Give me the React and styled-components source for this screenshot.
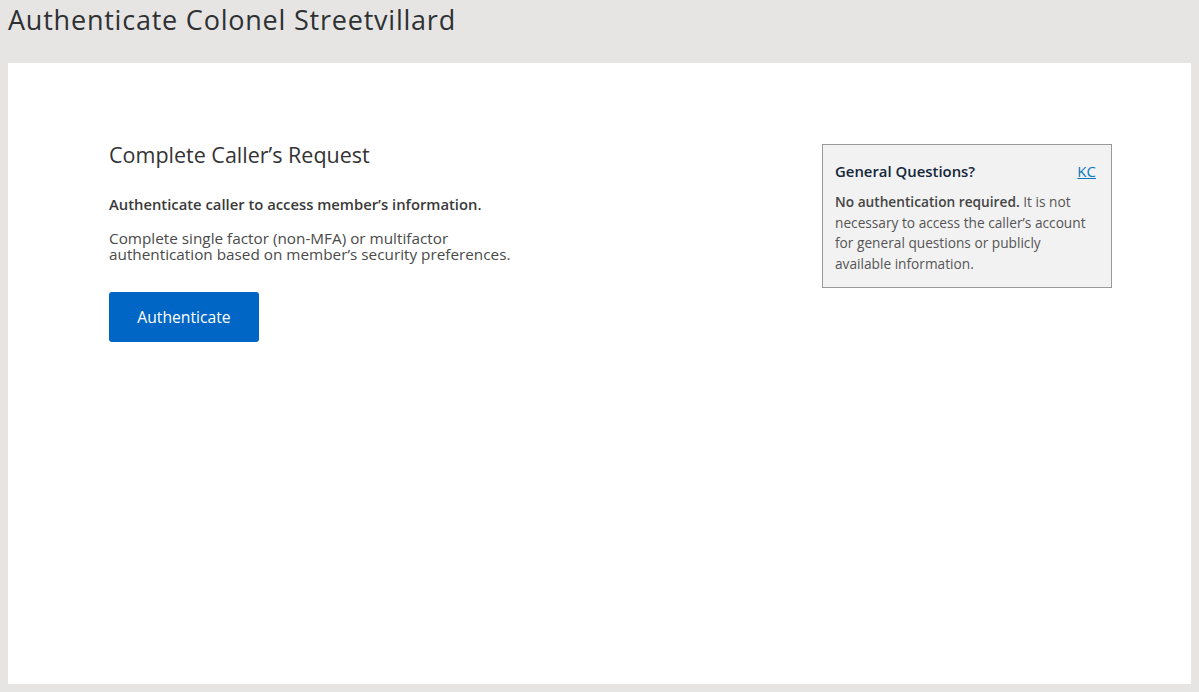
import React from 'react';
import styled, { createGlobalStyle } from 'styled-components';

const GlobalStyle = createGlobalStyle`
  html, body {
    margin: 0;
    padding: 0;
    background: #e6e5e3;
  }
  body {
    font-family: "Open Sans", Lato, sans-serif;
    color: #333;
  }
`;

const Page = styled.div`
  min-height: 692px;
  padding: 0 8px 8px;
  box-sizing: border-box;
  display: flex;
  flex-direction: column;
`;

const PageTitle = styled.h1`
  margin: 0;
  height: 63px;
  box-sizing: border-box;
  font-size: 27px;
  line-height: 40px;
  font-weight: 400;
  letter-spacing: 0.78px;
  color: #2e3133;
`;

const Panel = styled.main`
  flex: 1;
  background: #fff;
  padding: 81px 79px 40px 101px;
  display: flex;
  justify-content: space-between;
  align-items: flex-start;
`;

const Request = styled.section``;

const Heading = styled.h2`
  margin: -4px 0 25px;
  font-size: 21.5px;
  font-weight: 500;
  color: #333;
`;

const Lead = styled.p`
  margin: 0 0 16px;
  font-size: 14.8px;
  font-weight: 600;
  color: #3a3a3a;
`;

const Body = styled.p`
  margin: 0 0 30px;
  font-size: 15.3px;
  line-height: 16px;
  color: #4a4a4a;
  max-width: 420px;
`;

const Button = styled.button`
  width: 150px;
  height: 50px;
  border: none;
  border-radius: 3px;
  background: #0066c5;
  color: #fff;
  font-family: inherit;
  font-size: 15.7px;
  cursor: pointer;
`;

const InfoBox = styled.aside`
  width: 290px;
  box-sizing: border-box;
  background: #f2f2f2;
  border: 1px solid #999;
  padding: 16px 15px 13px 12px;
`;

const InfoHeader = styled.div`
  display: flex;
  justify-content: space-between;
  align-items: baseline;
  margin-bottom: 11px;
`;

const InfoTitle = styled.h3`
  margin: 0;
  font-size: 14.9px;
  font-weight: 600;
  color: #13263a;
`;

const InfoLink = styled.a`
  font-size: 15px;
  color: #0a78bf;
  text-decoration: underline;
`;

const InfoText = styled.p`
  margin: 0;
  font-size: 13.7px;
  line-height: 20.6px;
  color: #555;

  strong {
    font-weight: 600;
    color: #444;
  }
`;

export default function App() {
  return (
    <>
      <GlobalStyle />
      <Page>
        <PageTitle>Authenticate Colonel Streetvillard</PageTitle>
        <Panel>
          <Request>
            <Heading>Complete Caller’s Request</Heading>
            <Lead>Authenticate caller to access member’s information.</Lead>
            <Body>
              Complete single factor (non-MFA) or multifactor authentication based on
              member’s security preferences.
            </Body>
            <Button>Authenticate</Button>
          </Request>
          <InfoBox>
            <InfoHeader>
              <InfoTitle>General Questions?</InfoTitle>
              <InfoLink href="#">KC</InfoLink>
            </InfoHeader>
            <InfoText>
              <strong>No authentication required.</strong> It is not necessary to access the
              caller’s account for general questions or publicly available information.
            </InfoText>
          </InfoBox>
        </Panel>
      </Page>
    </>
  );
}
